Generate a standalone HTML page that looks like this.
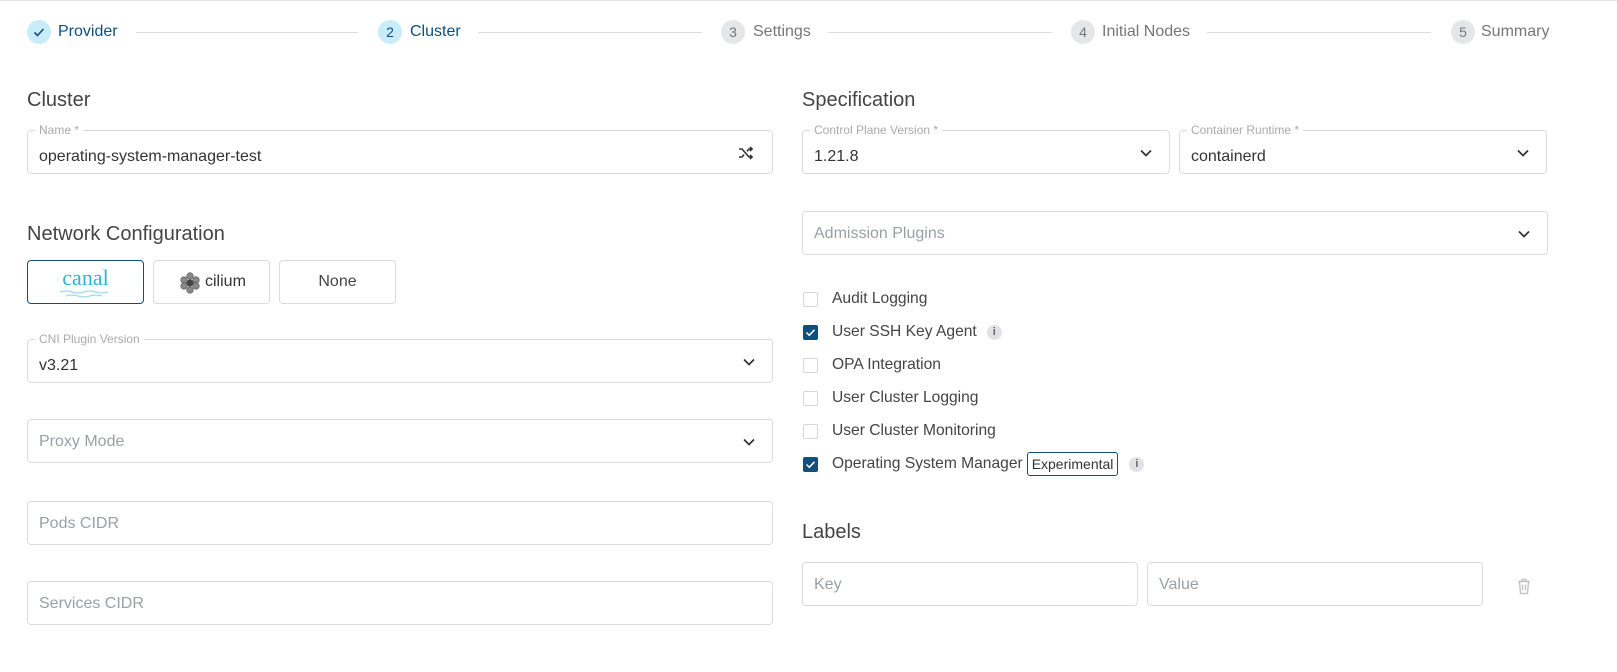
<!DOCTYPE html>
<html><head><meta charset="utf-8"><style>
*{box-sizing:border-box;margin:0;padding:0}
body{width:1617px;height:672px;background:#fff;font-family:"Liberation Sans",sans-serif;color:#333;position:relative;overflow:hidden;border-top:1px solid #e6e6e6}
.a{position:absolute}
.circ{position:absolute;top:19px;width:24px;height:24px;border-radius:50%;font-size:14px;text-align:center;line-height:24px}
.on{background:#c9ecfb;color:#0d4f7f}
.off{background:#e4e6e8;color:#777}
.st{position:absolute;top:22px;font-size:16px}
.ln{position:absolute;top:31px;height:1px;background:#ddd}
h2{position:absolute;font-size:20px;font-weight:normal;color:#444}
.f{position:absolute;border:1px solid #dcdcdc;border-radius:4px;height:44px;font-size:16px;color:#333;padding:0 11px;line-height:44px}
.f .lbl{position:absolute;top:-8px;left:7px;background:#fff;padding:0 4px;font-size:12px;line-height:14px;color:#aaa}
.f .v{position:absolute;top:5px;left:11px;line-height:44px}
.ph{color:#9aa0a6}
.chev{position:absolute;right:16px;top:15px}
.btn{position:absolute;top:259px;height:44px;border:1px solid #dcdcdc;border-radius:4px;width:117px;text-align:center;font-size:16px;color:#444;line-height:42px}
.cb{position:absolute;left:803px;width:15px;height:15px;border:1px solid #d6d6d6;border-radius:2px;background:#fff}
.cb.c{background:#0d4f7f;border-color:#0d4f7f}
.cl{position:absolute;left:832px;font-size:15.6px;color:#444;display:flex;align-items:center;height:20px;white-space:nowrap}
.info{display:inline-block;width:15px;height:15px;border-radius:50%;background:#e0e2e5;color:#666;font-size:11px;font-weight:bold;text-align:center;line-height:15px}
</style></head><body>
<div class="circ on" style="left:27px"><svg width="24" height="24" viewBox="0 0 24 24"><path d="M7.5 12.5l3 3 6-6.5" fill="none" stroke="#0d4f7f" stroke-width="1.6"/></svg></div>
<div class="st" style="left:58px;color:#0d4f7f">Provider</div>
<div class="ln" style="left:136px;width:222px"></div>
<div class="circ on" style="left:378px">2</div>
<div class="st" style="left:410px;color:#0d4f7f">Cluster</div>
<div class="ln" style="left:478px;width:224px"></div>
<div class="circ off" style="left:721px">3</div>
<div class="st" style="left:753px;color:#777">Settings</div>
<div class="ln" style="left:828px;width:224px"></div>
<div class="circ off" style="left:1071px">4</div>
<div class="st" style="left:1102px;color:#777">Initial Nodes</div>
<div class="ln" style="left:1207px;width:224px"></div>
<div class="circ off" style="left:1451px">5</div>
<div class="st" style="left:1481px;color:#777">Summary</div>

<h2 style="left:27px;top:88px">Cluster</h2>
<div class="f" style="left:27px;top:129px;width:746px"><span class="lbl">Name *</span><span class="v" style="top:4px">operating-system-manager-test</span>
<svg class="a" style="right:18px;top:14px" width="16" height="16" viewBox="0 0 16 16" fill="none" stroke="#333" stroke-width="1.6"><path d="M1 4h3l7 8h3M1 12h3l2-2.3M9 6.3L11 4h3M12 2l2 2-2 2M12 10l2 2-2 2"/></svg></div>

<h2 style="left:27px;top:222px">Network Configuration</h2>
<div class="btn" style="left:27px;border-color:#0d4f7f"><span style="font-family:'Liberation Serif',serif;font-size:22px;color:#2ab6d6;line-height:34px;display:block">canal</span>
<svg class="a" style="left:32px;top:29px" width="52" height="8" viewBox="0 0 52 8" fill="none" stroke="#9ed9ea" stroke-width="1.2"><path d="M0 2q6-2 12 0t12 0 12 0 12 0M6 6q6-2 12 0t12 0 12 0"/></svg></div>
<div class="btn" style="left:153px"><svg class="a" style="left:25px;top:11px" width="22" height="22" viewBox="0 0 22 22"><g fill="#888" stroke="#555" stroke-width=".6"><circle cx="11" cy="4" r="3.3"/><circle cx="5" cy="8" r="3.3"/><circle cx="17" cy="8" r="3.3"/><circle cx="5" cy="14" r="3.3"/><circle cx="17" cy="14" r="3.3"/><circle cx="11" cy="18" r="3.3"/><circle cx="11" cy="11" r="3.3" fill="#444"/></g></svg><span style="position:absolute;left:51px;top:0;font-size:16px;color:#333">cilium</span></div>
<div class="btn" style="left:279px">None</div>

<div class="f" style="left:27px;top:338px;width:746px"><span class="lbl">CNI Plugin Version</span><span class="v" style="top:4px">v3.21</span>
<svg class="chev" width="14" height="14" viewBox="0 0 14 14"><path d="M2 4.5l5 5 5-5" fill="none" stroke="#333" stroke-width="1.7"/></svg></div>
<div class="f" style="left:27px;top:418px;width:746px"><span class="ph">Proxy Mode</span>
<svg class="chev" width="14" height="14" viewBox="0 0 14 14"><path d="M2 4.5l5 5 5-5" fill="none" stroke="#333" stroke-width="1.7"/></svg></div>
<div class="f" style="left:27px;top:500px;width:746px"><span class="ph">Pods CIDR</span></div>
<div class="f" style="left:27px;top:580px;width:746px"><span class="ph">Services CIDR</span></div>

<h2 style="left:802px;top:88px">Specification</h2>
<div class="f" style="left:802px;top:129px;width:368px"><span class="lbl">Control Plane Version *</span><span class="v" style="top:4px">1.21.8</span>
<svg class="chev" width="14" height="14" viewBox="0 0 14 14"><path d="M2 4.5l5 5 5-5" fill="none" stroke="#333" stroke-width="1.7"/></svg></div>
<div class="f" style="left:1179px;top:129px;width:368px"><span class="lbl">Container Runtime *</span><span class="v" style="top:4px">containerd</span>
<svg class="chev" width="14" height="14" viewBox="0 0 14 14"><path d="M2 4.5l5 5 5-5" fill="none" stroke="#333" stroke-width="1.7"/></svg></div>
<div class="f" style="left:802px;top:210px;width:746px"><span class="ph">Admission Plugins</span>
<svg class="chev" width="14" height="14" viewBox="0 0 14 14"><path d="M2 4.5l5 5 5-5" fill="none" stroke="#333" stroke-width="1.7"/></svg></div>

<div class="cb" style="top:291px"></div><div class="cl" style="top:288px">Audit Logging</div>
<div class="cb c" style="top:324px"><svg width="13" height="13" viewBox="0 0 13 13"><path d="M2.5 6.5l2.8 2.8 5.2-5.5" fill="none" stroke="#fff" stroke-width="1.5"/></svg></div><div class="cl" style="top:321px">User SSH Key Agent<span class="info" style="margin-left:10px">i</span></div>
<div class="cb" style="top:357px"></div><div class="cl" style="top:354px">OPA Integration</div>
<div class="cb" style="top:390px"></div><div class="cl" style="top:387px">User Cluster Logging</div>
<div class="cb" style="top:423px"></div><div class="cl" style="top:420px">User Cluster Monitoring</div>
<div class="cb c" style="top:456px"><svg width="13" height="13" viewBox="0 0 13 13"><path d="M2.5 6.5l2.8 2.8 5.2-5.5" fill="none" stroke="#fff" stroke-width="1.5"/></svg></div><div class="cl" style="top:453px">Operating System Manager<span style="margin-left:4px;padding:0 4px;height:24px;border:1px solid #0d4f7f;border-radius:3px;font-size:14px;color:#333;line-height:22px">Experimental</span><span class="info" style="margin-left:11px">i</span></div>

<h2 style="left:802px;top:520px">Labels</h2>
<div class="f" style="left:802px;top:561px;width:336px"><span class="ph">Key</span></div>
<div class="f" style="left:1147px;top:561px;width:336px"><span class="ph">Value</span></div>
<svg class="a" style="left:1516px;top:577px" width="16" height="17" viewBox="0 0 16 17" fill="none" stroke="#c4c4c4" stroke-width="1.4"><path d="M2 3.5h12M6 3.5V1.5h4v2M3.5 3.5l1 12h7l1-12M6.5 6.5v6M9.5 6.5v6"/></svg>
</body></html>
